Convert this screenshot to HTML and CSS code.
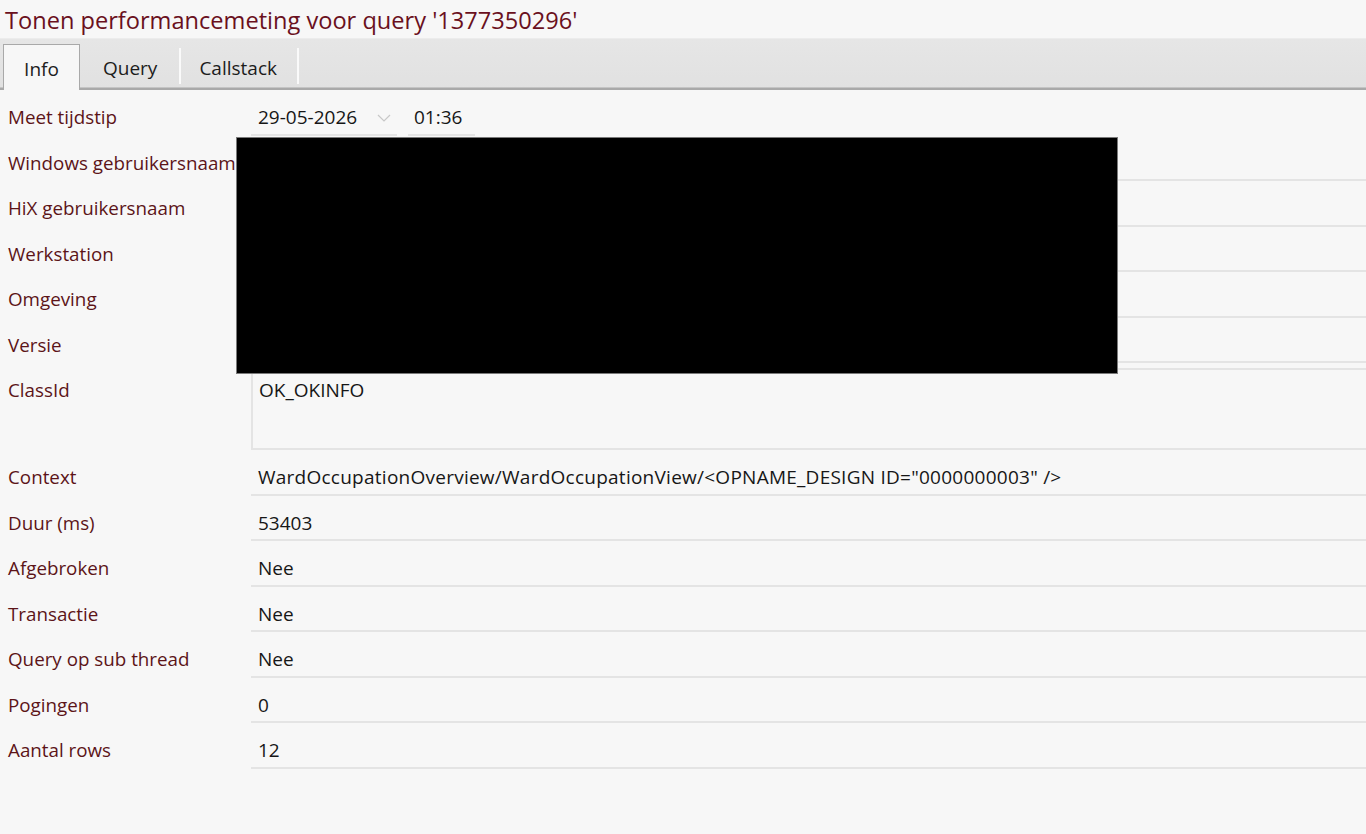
FILE: index.html
```html
<!DOCTYPE html>
<html lang="nl">
<head>
<meta charset="utf-8">
<title>Tonen performancemeting</title>
<link rel="stylesheet" href="styles.css">
</head>
<body>
<div class="window">
  <h1 class="title">Tonen performancemeting voor query '1377350296'</h1>

  <div class="tabstrip">
    <div class="tab active">Info</div>
    <div class="tab">Query</div>
    <div class="tab tab-callstack">Callstack</div>
  </div>

  <div class="form">
    <div class="row">
      <div class="label">Meet tijdstip</div>
      <div class="datetime">
        <div class="field date">29-05-2026
          <svg class="chevron" width="14" height="8" viewBox="0 0 14 8"><path d="M1 1 L7 7 L13 1" fill="none" stroke="#c8c8c8" stroke-width="1.2"/></svg>
        </div>
        <div class="field time">01:36</div>
      </div>
    </div>
    <div class="row">
      <div class="label">Windows gebruikersnaam</div>
      <div class="field"></div>
    </div>
    <div class="row">
      <div class="label">HiX gebruikersnaam</div>
      <div class="field"></div>
    </div>
    <div class="row">
      <div class="label">Werkstation</div>
      <div class="field"></div>
    </div>
    <div class="row">
      <div class="label">Omgeving</div>
      <div class="field"></div>
    </div>
    <div class="row">
      <div class="label">Versie</div>
      <div class="field"></div>
    </div>
    <div class="row tall">
      <div class="label">ClassId</div>
      <div class="memo">OK_OKINFO</div>
    </div>
    <div class="row">
      <div class="label">Context</div>
      <div class="field wide">WardOccupationOverview/WardOccupationView/&lt;OPNAME_DESIGN ID="0000000003" /&gt;</div>
    </div>
    <div class="row">
      <div class="label">Duur (ms)</div>
      <div class="field">53403</div>
    </div>
    <div class="row">
      <div class="label">Afgebroken</div>
      <div class="field">Nee</div>
    </div>
    <div class="row">
      <div class="label">Transactie</div>
      <div class="field">Nee</div>
    </div>
    <div class="row">
      <div class="label">Query op sub thread</div>
      <div class="field">Nee</div>
    </div>
    <div class="row">
      <div class="label">Pogingen</div>
      <div class="field">0</div>
    </div>
    <div class="row">
      <div class="label">Aantal rows</div>
      <div class="field">12</div>
    </div>

    <div class="redaction"></div>
  </div>
</div>
</body>
</html>
```

FILE: styles.css
```css
html, body {
  margin: 0;
  padding: 0;
  background: #f7f7f7;
}

body {
  font-family: "Open Sans", "Noto Sans", sans-serif;
  width: 1366px;
  height: 834px;
  overflow: hidden;
}

.title {
  margin: 0;
  padding: 5px 0 0 5px;
  height: 32px;
  box-sizing: border-box;
  font-size: 23.6px;
  font-weight: 400;
  line-height: 30px;
  color: #6a1020;
  white-space: nowrap;
}

/* tab strip */
.tabstrip {
  margin-top: 6px;
  height: 52px;
  box-sizing: border-box;
  display: flex;
  align-items: flex-end;
  padding-left: 3px;
  background: linear-gradient(#e6e6e6, #e1e1e1);
  border-top: 1px solid #ececec;
  border-bottom: 2px solid #a9a9a9;
  box-shadow: inset 0 -1px 0 #c4c4c4;
}

.tab {
  height: 36px;
  margin-bottom: 4px;
  padding: 0 22px 0 23px;
  font-size: 19px;
  line-height: 41px;
  color: #1c1c1c;
  border-right: 2px solid #fafafa;
}

.tab-callstack {
  padding: 0 20px 0 18px;
}

.tab.active {
  height: 46px;
  margin-bottom: -2px;
  width: 77px;
  padding: 0;
  box-sizing: border-box;
  text-align: center;
  line-height: 48px;
  background: #f7f7f7;
  border: 1px solid #a9a9a9;
  border-bottom: none;
  color: #202020;
}

/* form rows */
.form {
  position: relative;
}

.row {
  display: flex;
  height: 45.5px;
}

.label {
  width: 251px;
  flex: none;
  padding: 16px 0 0 8px;
  box-sizing: border-box;
  font-size: 18.8px;
  line-height: 22px;
  color: #5c1418;
  white-space: nowrap;
}

.field {
  flex: 1;
  box-sizing: border-box;
  height: 45.5px;
  padding: 16px 0 0 7px;
  font-size: 19px;
  line-height: 22px;
  color: #161616;
  border-bottom: 2px solid #e4e4e4;
  white-space: nowrap;
}

.field.wide {
  letter-spacing: 0.25px;
}

.datetime {
  display: flex;
  gap: 11px;
}

.field.date {
  flex: none;
  width: 146px;
  position: relative;
}

.chevron {
  position: absolute;
  right: 6px;
  top: 24px;
}

.field.time {
  flex: none;
  width: 67px;
  padding-left: 6px;
}

.row.tall {
  height: 87px;
}

.memo {
  flex: 1;
  margin-top: 5px;
  height: 82px;
  box-sizing: border-box;
  padding: 9px 0 0 6px;
  font-size: 19px;
  line-height: 22px;
  color: #161616;
  border: 2px solid #e4e4e4;
  border-right: none;
}

/* blacked-out block over the personal fields */
.redaction {
  position: absolute;
  left: 236px;
  top: 47px;
  width: 882px;
  height: 237px;
  background: #000;
  border: 1px solid #7a7a7a;
  box-sizing: border-box;
}
```
